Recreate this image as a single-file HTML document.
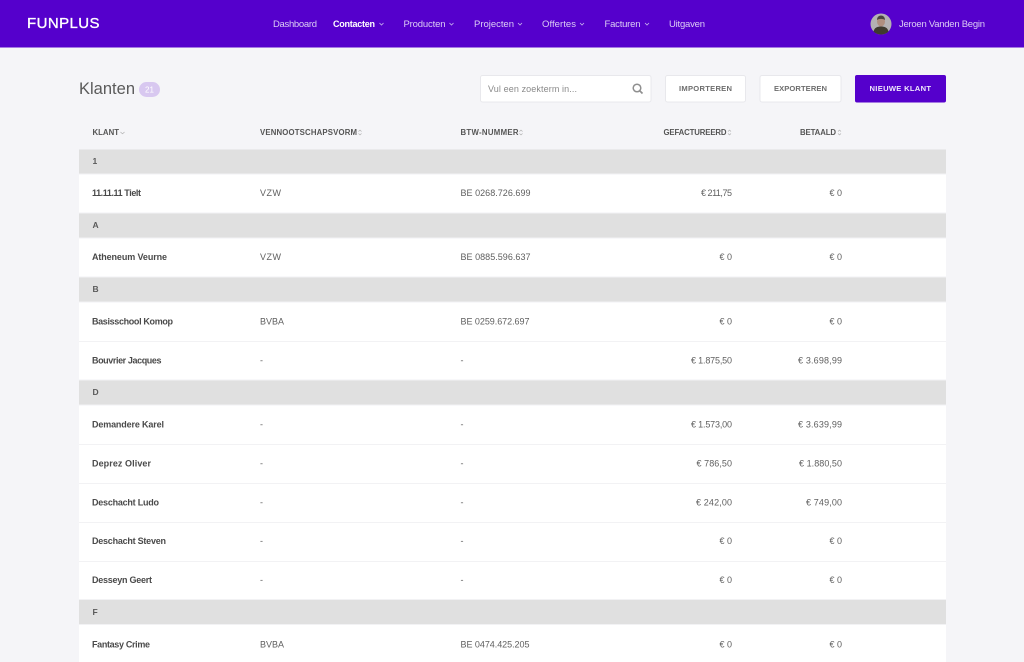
<!DOCTYPE html>
<html lang="nl">
<head>
<meta charset="utf-8">
<title>Klanten</title>
<style>
html,body{margin:0;padding:0;width:1024px;height:662px;overflow:hidden;background:#f5f5f8}
svg{display:block;filter:blur(.35px)}
text{font-family:"Liberation Sans",sans-serif;font-size:10px}
.nav{fill:#dccdf5;font-size:9.5px}
.n{fill:#4a4a4a;font-weight:bold;font-size:9px}
.v{fill:#5f5f5f;font-size:9px}
.g{fill:#5a5a5a;font-weight:bold;font-size:8.5px}
.h{fill:#555;font-weight:bold;font-size:7.8px}
.b{fill:#6e6e6e;font-weight:bold;font-size:7.6px}
.s{fill:none;stroke:#aaa;stroke-width:.6}
.c{fill:none;stroke:#c9b6ee;stroke-width:.8}
</style>
</head>
<body>
<svg width="1024" height="662" viewBox="0 0 1024 662" xmlns="http://www.w3.org/2000/svg">
<rect width="1024" height="662" fill="#f5f5f8"/>
<rect width="1024" height="47.5" fill="#5500cc"/>
<text x="27" y="28" textLength="72.5" style="font-size:15px;fill:#fff;stroke:#fff;stroke-width:.35">FUNPLUS</text>
<text class="nav" x="273" y="27" textLength="44">Dashboard</text>
<text class="nav" x="333" y="27" textLength="42" style="fill:#fff;font-weight:bold;font-size:9px">Contacten</text>
<path class="c" d="M379.5 23l2 2 2-2"/>
<text class="nav" x="403.5" y="27" textLength="42">Producten</text>
<path class="c" d="M449.5 23l2 2 2-2"/>
<text class="nav" x="474" y="27" textLength="40">Projecten</text>
<path class="c" d="M518 23l2 2 2-2"/>
<text class="nav" x="542" y="27" textLength="34">Offertes</text>
<path class="c" d="M580 23l2 2 2-2"/>
<text class="nav" x="604.5" y="27" textLength="36">Facturen</text>
<path class="c" d="M645 23l2 2 2-2"/>
<text class="nav" x="669" y="27" textLength="36">Uitgaven</text>
<circle cx="881" cy="24" r="10.5" fill="#b4b1b3"/>
<path d="M873.5 31.5c1-4 4-5 7.5-5s6.5 1 7.5 5c-2 2-4.5 3-7.5 3s-5.500-1-7.500-3z" fill="#3f3a2e"/>
<ellipse cx="881" cy="21.5" rx="4" ry="5" fill="#b08f80"/>
<path d="M877 20c0-3 2-4.500 4-4.500s4 1.500 4 4.500c-2-1.500-6-1.500-8 0z" fill="#4a4440"/>
<text class="nav" x="899" y="27" textLength="86">Jeroen Vanden Begin</text>

<text x="79" y="94" textLength="56" style="font-size:16.5px;fill:#5a5a5a">Klanten</text>
<rect x="139" y="82" width="21" height="15" rx="7.5" fill="#d8c8f0"/>
<text x="149.5" y="92.5" text-anchor="middle" style="font-size:8px;fill:#fff">21</text>

<rect x="480.5" y="75.5" width="170.5" height="26.5" rx="2" fill="#fff" stroke="#e8e8ec"/>
<text x="488" y="92" textLength="89" style="font-size:9px;fill:#8a8a8a">Vul een zoekterm in...</text>
<circle cx="637" cy="88" r="3.8" fill="none" stroke="#8f8f8f" stroke-width="1.5"/>
<path d="M639.8 90.800l2.700 2.700" stroke="#8f8f8f" stroke-width="1.700" fill="none"/>
<rect x="665.5" y="75.5" width="80" height="26.5" rx="2" fill="#fff" stroke="#e8e8ec"/>
<text class="b" x="679" y="91" textLength="53">IMPORTEREN</text>
<rect x="760" y="75.5" width="81" height="26.5" rx="2" fill="#fff" stroke="#e8e8ec"/>
<text class="b" x="774" y="91" textLength="53">EXPORTEREN</text>
<rect x="855" y="75" width="91" height="27.5" rx="2" fill="#5500cc"/>
<text class="b" x="869.5" y="91" textLength="61.5" style="fill:#efe8fb">NIEUWE KLANT</text>

<text class="h" x="92.5" y="135" textLength="26.5">KLANT</text>
<path class="s" d="M120.500 132l2 1.800 2-1.800"/>
<text class="h" x="260" y="135" textLength="97">VENNOOTSCHAPSVORM</text>
<path class="s" d="M358.500 131.500l1.500-1.500 1.500 1.500M358.500 133.500l1.500 1.500 1.500-1.500"/>
<text class="h" x="460.5" y="135" textLength="58">BTW-NUMMER</text>
<path class="s" d="M519.500 131.500l1.500-1.500 1.500 1.500M519.500 133.500l1.500 1.500 1.500-1.500"/>
<text class="h" x="663.5" y="135" textLength="63">GEFACTUREERD</text>
<path class="s" d="M728 131.500l1.500-1.500 1.500 1.500M728 133.500l1.500 1.500 1.500-1.500"/>
<text class="h" x="800" y="135" textLength="36">BETAALD</text>
<path class="s" d="M838 131.500l1.500-1.500 1.500 1.500M838 133.500l1.500 1.500 1.500-1.500"/>

<rect x="79" y="150" width="867" height="512" fill="#fff"/>
<g fill="#e0e0e0">
<rect x="79" y="149.5" width="867" height="24"/>
<rect x="79" y="213.5" width="867" height="24"/>
<rect x="79" y="277.5" width="867" height="24"/>
<rect x="79" y="380.5" width="867" height="24"/>
<rect x="79" y="600" width="867" height="24"/>
</g>
<g fill="#f2f2f4">
<rect x="79" y="173.5" width="867" height="1"/>
<rect x="79" y="212.5" width="867" height="1"/>
<rect x="79" y="237.5" width="867" height="1"/>
<rect x="79" y="276.5" width="867" height="1"/>
<rect x="79" y="301.5" width="867" height="1"/>
<rect x="79" y="341" width="867" height="1"/>
<rect x="79" y="379.5" width="867" height="1"/>
<rect x="79" y="404.5" width="867" height="1"/>
<rect x="79" y="444" width="867" height="1"/>
<rect x="79" y="483" width="867" height="1"/>
<rect x="79" y="522" width="867" height="1"/>
<rect x="79" y="561" width="867" height="1"/>
<rect x="79" y="599" width="867" height="1"/>
<rect x="79" y="624" width="867" height="1"/>
</g>

<text class="g" x="92.5" y="164">1</text>
<text class="g" x="92.5" y="228">A</text>
<text class="g" x="92.5" y="292">B</text>
<text class="g" x="92.5" y="395">D</text>
<text class="g" x="92.5" y="615">F</text>

<text class="n" x="92" y="196" textLength="49">11.11.11 Tielt</text>
<text class="v" x="260" y="196" textLength="21">VZW</text>
<text class="v" x="460.5" y="196" textLength="70">BE 0268.726.699</text>
<text class="v" x="701" y="196" textLength="31">€ 211,75</text>
<text class="v" x="842" y="196" text-anchor="end">€ 0</text>

<text class="n" x="92" y="260" textLength="75">Atheneum Veurne</text>
<text class="v" x="260" y="260" textLength="21">VZW</text>
<text class="v" x="460.5" y="260" textLength="70">BE 0885.596.637</text>
<text class="v" x="732" y="260" text-anchor="end">€ 0</text>
<text class="v" x="842" y="260" text-anchor="end">€ 0</text>

<text class="n" x="92" y="324.5" textLength="81">Basisschool Komop</text>
<text class="v" x="260" y="324.5" textLength="24">BVBA</text>
<text class="v" x="460.5" y="324.5" textLength="69">BE 0259.672.697</text>
<text class="v" x="732" y="324.5" text-anchor="end">€ 0</text>
<text class="v" x="842" y="324.5" text-anchor="end">€ 0</text>

<text class="n" x="92" y="363.5" textLength="69.5">Bouvrier Jacques</text>
<text class="v" x="260" y="363.5">-</text>
<text class="v" x="460.5" y="363.5">-</text>
<text class="v" x="691" y="363.5" textLength="41">€ 1.875,50</text>
<text class="v" x="798" y="363.5" textLength="44">€ 3.698,99</text>

<text class="n" x="92" y="427.5" textLength="72">Demandere Karel</text>
<text class="v" x="260" y="427.5">-</text>
<text class="v" x="460.5" y="427.5">-</text>
<text class="v" x="691" y="427.5" textLength="41">€ 1.573,00</text>
<text class="v" x="798" y="427.5" textLength="44">€ 3.639,99</text>

<text class="n" x="92" y="466.5" textLength="59">Deprez Oliver</text>
<text class="v" x="260" y="466.5">-</text>
<text class="v" x="460.5" y="466.5">-</text>
<text class="v" x="696.5" y="466.5" textLength="35.5">€ 786,50</text>
<text class="v" x="799" y="466.5" textLength="43">€ 1.880,50</text>

<text class="n" x="92" y="505.5" textLength="67">Deschacht Ludo</text>
<text class="v" x="260" y="505.5">-</text>
<text class="v" x="460.5" y="505.5">-</text>
<text class="v" x="696" y="505.5" textLength="36">€ 242,00</text>
<text class="v" x="806" y="505.5" textLength="36">€ 749,00</text>

<text class="n" x="92" y="544" textLength="74">Deschacht Steven</text>
<text class="v" x="260" y="544">-</text>
<text class="v" x="460.5" y="544">-</text>
<text class="v" x="732" y="544" text-anchor="end">€ 0</text>
<text class="v" x="842" y="544" text-anchor="end">€ 0</text>

<text class="n" x="92" y="583" textLength="60">Desseyn Geert</text>
<text class="v" x="260" y="583">-</text>
<text class="v" x="460.5" y="583">-</text>
<text class="v" x="732" y="583" text-anchor="end">€ 0</text>
<text class="v" x="842" y="583" text-anchor="end">€ 0</text>

<text class="n" x="92" y="647.5" textLength="58">Fantasy Crime</text>
<text class="v" x="260" y="647.5" textLength="24">BVBA</text>
<text class="v" x="460.5" y="647.5" textLength="69">BE 0474.425.205</text>
<text class="v" x="732" y="647.5" text-anchor="end">€ 0</text>
<text class="v" x="842" y="647.5" text-anchor="end">€ 0</text>
</svg>
</body>
</html>
